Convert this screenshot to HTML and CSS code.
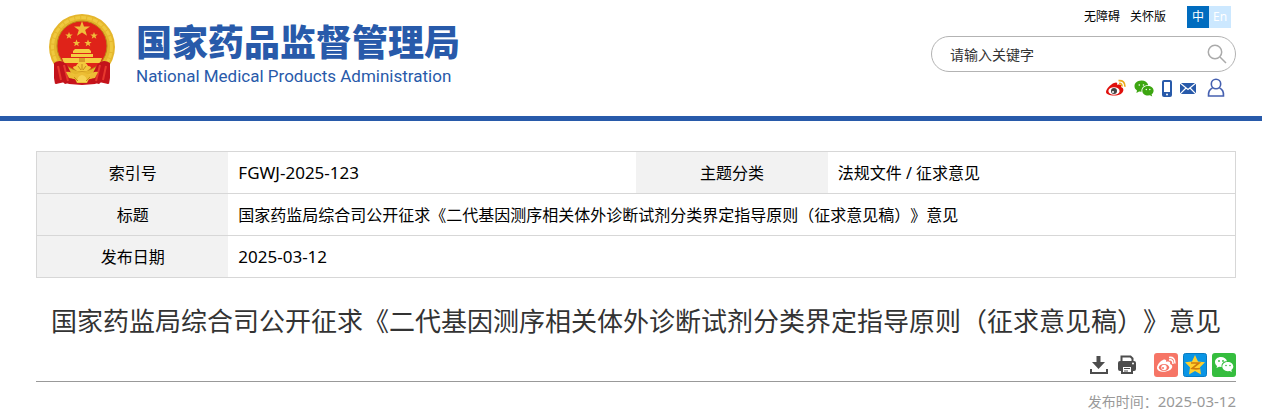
FILE: index.html
```html
<!DOCTYPE html>
<html lang="zh-CN">
<head>
  <meta charset="UTF-8" />
  <meta name="viewport" content="width=device-width, initial-scale=1" />
  <title>国家药品监督管理局</title>
  <link rel="stylesheet" href="styles.css">
</head>
<body>

  <header class="header">
    <a class="logo" href="#">
      <svg class="emblem" viewBox="0 0 68 72" aria-hidden="true">
        <path d="M9 50 Q20 56 34 57 Q48 56 59 50 L61 60 L60 70 L51 68 L47 70 L34 71 L21 70 L17 68 L8 70 L7 60Z" fill="#c8141c"/>
        <circle cx="34" cy="33" r="33" fill="#e5b62c"/>
        <circle cx="34" cy="33" r="29.500" fill="none" stroke="#efc93f" stroke-width="3" stroke-dasharray="5 1"/>
        <circle cx="34" cy="32" r="25" fill="#df2319" stroke="#bd8518"/>
        <path d="M34 7l2 5.500h6l-4.800 3.600 1.800 5.700-5-3.400-5 3.400 1.800-5.700-4.800-3.600h6z" fill="#f0bd3a"/>
        <path d="M21 18l1 2.500h2.700l-2.200 1.700.8 2.600-2.300-1.500-2.300 1.500.8-2.600-2.200-1.700H20zM46 18l1 2.500h2.700l-2.200 1.700.8 2.600-2.300-1.500-2.300 1.500.8-2.600-2.200-1.700H45zM28.500 25.500l1 2.500h2.700L30 29.700l.8 2.600-2.300-1.500-2.300 1.500.8-2.600-2.200-1.700h2.700zM40 25.500l1 2.500h2.700l-2.200 1.700.8 2.600-2.300-1.500-2.300 1.500.8-2.600-2.200-1.700H39z" fill="#f0bd3a"/>
        <path d="M25 37l2-2h14l2 2v2H25zM23 40h22v3H23zM14 44h40l-2 5H16z" fill="#f5cd42"/>
        <path d="M31 44h6v4h-6z" fill="#d99e28"/>
        <path d="M6 49q7-5 13 2l4 8 2 9-8 2-3-3-7 3-1-6zM62 49q-7-5-13 2l-4 8-2 9 8 2 3-3 7 3 1-6z" fill="#c3131b"/>
        <path d="M10 52l3 14M16 51l4 16M58 52l-3 14M52 51l-4 16" stroke="#e7392d" stroke-width="2"/>
        <path d="M18 58q5-1 8 3l8-3 8 3q3-4 8-3l-3 6-6 1-2 4H29l-2-4-6-1z" fill="#edbe35"/>
        <path d="M25 54q0-2 3-2 2-4 6-4t6 4q3 0 3 2l-4 3H29z" fill="#f3c93d"/>
        <path d="M29 68q0-6 5-7 5 1 5 7z" fill="#f7d456"/>
        <path d="M26 63l4 4M42 63l-4 4M34 50v6M30 52l3 4M38 52l-3 4" fill="none" stroke="#c68b1d"/>
      </svg>
      <span class="logo-text">
        <span class="logo-cn">国家药品监督管理局</span>
        <span class="logo-en">National Medical Products Administration</span>
      </span>
    </a>

    <div class="tools">
      <nav class="top-links">
        <a href="#">无障碍</a>
        <a href="#">关怀版</a>
        <span class="lang">
          <a class="active" href="#">中</a><a href="#">En</a>
        </span>
      </nav>
      <form class="search">
        <input type="text" placeholder="请输入关键字" aria-label="请输入关键字">
        <button type="button" aria-label="搜索">
          <svg width="20" height="20" viewBox="0 0 20 20" fill="none" stroke="#aaa" stroke-width="1.500"><circle cx="8" cy="8" r="6.700"/><path d="M13 13l6 6"/></svg>
        </button>
      </form>
      <div class="social">
        <a href="#" aria-label="微博">
          <svg width="20" height="18" viewBox="0 0 20 18">
            <path d="M8 4c2-1 4-1 3 2 3-1 5 0 4 2 3 1 3 4 1 6-4 4-16 3-16-1 0-3 5-8 8-9z" fill="#e0100c"/>
            <ellipse cx="8" cy="12" rx="5.600" ry="3.800" fill="#fff"/>
            <circle cx="8" cy="12" r="3" fill="#444"/><circle cx="7" cy="13" r="1" fill="#fff"/>
            <path d="M13 4.500q3-.5 3 3M12.500 1.700q6.500-.7 6.500 6" fill="none" stroke="#eba91c" stroke-width="1.700"/>
          </svg>
        </a>
        <a href="#" aria-label="微信">
          <svg width="20" height="18" viewBox="0 0 20 18">
            <path d="M7.500 1.500C3 1.500.5 4.300.5 7.200c0 1.800 1 3.200 2.500 4.200l-.6 2.500 2.700-1.500 2.400.3C7 8.500 10 6 14.300 6.200 13.500 3.500 11 1.500 7.500 1.500z" fill="#3da611"/>
            <path d="M14 7c-3.300 0-5.700 2-5.700 4.700s2.400 4.800 5.700 4.800l1.900-.3 2.300 1.300-.6-2.200c1.200-.9 2-2 2-3.600C19.600 9 17 7 14 7z" fill="#3da611"/>
            <g fill="#fff"><circle cx="5.300" cy="6" r=".8"/><circle cx="9.500" cy="6" r=".8"/><circle cx="12.300" cy="10.500" r=".7"/><circle cx="15.800" cy="10.500" r=".7"/></g>
          </svg>
        </a>
        <a href="#" aria-label="移动端">
          <svg width="10" height="18" viewBox="0 0 10 18"><rect width="10" height="17" y="1" rx="2" fill="#285aaa"/><path d="M2 3h6v10H2z" fill="#fff"/><circle cx="5" cy="15.500" r="1" fill="#fff"/></svg>
        </a>
        <a href="#" aria-label="邮箱">
          <svg width="16" height="18" viewBox="0 0 16 18"><path d="M0 4h16v11H0z" fill="#285aaa"/><path d="M0 4l8 6.500L16 4M0 15l6-6M16 15l-6-6" fill="none" stroke="#fff" stroke-width="1.200"/></svg>
        </a>
        <a class="user" href="#" aria-label="个人中心">
          <svg width="18" height="20" viewBox="0 0 18 20" fill="none" stroke="#4560b0" stroke-width="1.600"><circle cx="9" cy="6" r="4.700"/><path d="M5.500 10Q1 12 1.500 18h15Q17 12 12.500 10"/></svg>
        </a>
      </div>
    </div>
  </header>

  <main class="content">
    <table class="info">
      <tr>
        <th scope="row">索引号</th>
        <td class="code">FGWJ-2025-123</td>
        <th scope="row">主题分类</th>
        <td>法规文件 / 征求意见</td>
      </tr>
      <tr>
        <th scope="row">标题</th>
        <td colspan="3">国家药监局综合司公开征求《二代基因测序相关体外诊断试剂分类界定指导原则（征求意见稿）》意见</td>
      </tr>
      <tr>
        <th scope="row">发布日期</th>
        <td class="code" colspan="3">2025-03-12</td>
      </tr>
    </table>

    <h1>国家药监局综合司公开征求《二代基因测序相关体外诊断试剂分类界定指导原则（征求意见稿）》意见</h1>

    <div class="actions">
      <button type="button" aria-label="下载">
        <svg width="20" height="20" viewBox="0 0 20 20" fill="#4d4d4d"><path d="M7.500 1h4v6h4.500l-6.500 7L3 7h4.500z"/><path d="M2 14v4h16v-4" fill="none" stroke="#4d4d4d" stroke-width="2"/></svg>
      </button>
      <button type="button" aria-label="打印">
        <svg width="20" height="20" viewBox="0 0 20 20"><path d="M4.500 6V1.500h9l2 2V6" fill="#fff" stroke="#4d4d4d" stroke-width="2"/><rect x="1" y="6" width="18" height="10" rx="2" fill="#4d4d4d"/><path d="M5 11h10v7H5z" fill="#fff" stroke="#4d4d4d" stroke-width="2"/><path d="M7 13.500h6M7 16h4" stroke="#4d4d4d"/><circle cx="16" cy="8.500" r="1" fill="#fff"/></svg>
      </button>
      <a class="share weibo" href="#" aria-label="分享到微博">
        <svg width="24" height="24" viewBox="0 0 24 24">
          <rect width="24" height="24" rx="3" fill="#f67566"/>
          <path d="M9 7c2-1 4 0 3 2 3-1 5 0 4 2 3 1 3 4 0 6-5 3-13 2-13-2 0-3 3-7 6-8z" fill="#fff"/>
          <ellipse cx="10" cy="14.500" rx="5.200" ry="3.500" fill="#f67566"/><circle cx="10" cy="14.500" r="2.700" fill="#fff"/><circle cx="9" cy="15" r="1" fill="#f67566"/>
          <path d="M15 7q4-1 4 4M15 4.500q6-1 6 6" fill="none" stroke="#fff" stroke-width="1.500"/>
        </svg>
      </a>
      <a class="share" href="#" aria-label="分享到QQ空间">
        <svg width="24" height="24" viewBox="0 0 24 24">
          <rect x=".5" y=".5" width="23" height="23" rx="2" fill="#0a95e5" stroke="#087bc0"/>
          <path d="M12 2l3 6.500 7 .8-5 5 1 7.200-6-3.500-6 3.500 1-7.200-5-5 7-.8z" fill="#ffd02e"/>
          <path d="M8 10h8l-7 5.500q4 .7 8 0" fill="none" stroke="#d07b0c" stroke-width="1.600"/>
        </svg>
      </a>
      <a class="share" href="#" aria-label="分享到微信">
        <svg width="24" height="24" viewBox="0 0 24 24">
          <rect width="24" height="24" rx="3" fill="#35bd3e"/>
          <path d="M9 4C5.500 4 3 6.200 3 9c0 1.600.8 3 2.100 3.900L4.500 15l2.600-1.300 2.500.3C9 10 12 8 15 8.200 14.400 5.700 12 4 9 4z" fill="#fff"/>
          <path d="M15.800 9c-3.200 0-5.500 2-5.500 4.600s2.300 4.600 5.500 4.600l1.900-.3 2.200 1.200-.6-2c1.200-.8 2-2 2-3.500C21.300 11 19 9 15.800 9z" fill="#fff"/>
          <g fill="#35bd3e"><circle cx="7" cy="8" r=".9"/><circle cx="11" cy="8" r=".9"/><circle cx="14" cy="12.500" r=".8"/><circle cx="18" cy="12.500" r=".8"/></g>
        </svg>
      </a>
    </div>

    <p class="publish">发布时间：<time datetime="2025-03-12">2025-03-12</time></p>
  </main>

</body>
</html>
```
FILE: styles.css
```css
* {
  box-sizing: border-box;
}
body {
  margin: 0;
  background: #fff;
  color: #000;
  font-family: "Noto Sans", "Noto Sans CJK SC", sans-serif;
  font-size: 16px;
  text-spacing-trim: space-all;
}
a {
  color: inherit;
  text-decoration: none;
}
svg {
  display: block;
}
button {
  padding: 0;
  border: none;
  background: none;
  cursor: pointer;
}

.header {
  display: flex;
  justify-content: space-between;
  align-items: flex-start;
  padding: 6px 26px 18px 48px;
  border-bottom: 5px solid #285aaa;
}
.logo {
  display: flex;
  gap: 20px;
  padding-top: 8px;
  color: #285aaa;
}
.emblem {
  width: 68px;
  height: 72px;
}
.logo-text {
  display: flex;
  flex-direction: column;
}
.logo-cn {
  font-family: "Noto Sans CJK SC", sans-serif;
  font-size: 36px;
  font-weight: 900;
  line-height: 52px;
}
.logo-en {
  font-family: Roboto, sans-serif;
  font-size: 17px;
  line-height: 20px;
}

.tools {
  width: 305px;
}
.top-links {
  display: flex;
  justify-content: flex-end;
  align-items: center;
  gap: 10px;
  padding-right: 5px;
  font-size: 12px;
  line-height: 22px;
}
.lang {
  display: flex;
  margin-left: 11px;
}
.lang a {
  width: 22px;
  background: #cce8ff;
  color: #fff;
  text-align: center;
}
.lang .active {
  background: #006cbf;
}
.search {
  display: flex;
  align-items: center;
  height: 36px;
  margin-top: 8px;
  padding: 0 8px 0 18px;
  border: 1px solid #b3b3b3;
  border-radius: 18px;
}
.search input {
  flex: 1;
  min-width: 0;
  padding: 0;
  border: none;
  outline: none;
  background: none;
  font-family: inherit;
  font-size: 14px;
}
.search input::placeholder {
  color: #333;
}
.social {
  display: flex;
  justify-content: flex-end;
  align-items: center;
  gap: 8px;
  margin-top: 6px;
  padding-right: 11px;
}
.social .user {
  margin-left: 3px;
}

.content {
  padding: 30px 26px 0 36px;
}
.info {
  width: 100%;
  border: 1px solid #d7d7d7;
  border-collapse: collapse;
  table-layout: fixed;
  line-height: 24px;
}
.info tr {
  height: 42px;
  border-bottom: 1px solid #d7d7d7;
}
.info th {
  width: 16%;
  padding: 0;
  background: #f2f2f2;
  font-weight: normal;
}
.info td {
  padding: 0 10px;
}
.info .code {
  font-size: 17px;
}

h1 {
  margin: 24px 0 12px;
  color: #333;
  font-size: 26px;
  font-weight: normal;
  line-height: 39px;
  text-align: center;
}
.actions {
  display: flex;
  justify-content: flex-end;
  align-items: center;
  gap: 8px;
  padding-bottom: 4px;
  border-bottom: 1px solid #999;
}
.share {
  margin-left: -3px;
}
.weibo {
  margin-left: 9px;
}
.publish {
  margin: 8px 0 0;
  color: #999;
  font-size: 14px;
  line-height: 22px;
  text-align: right;
}
.publish time {
  font-size: 15px;
}
```
